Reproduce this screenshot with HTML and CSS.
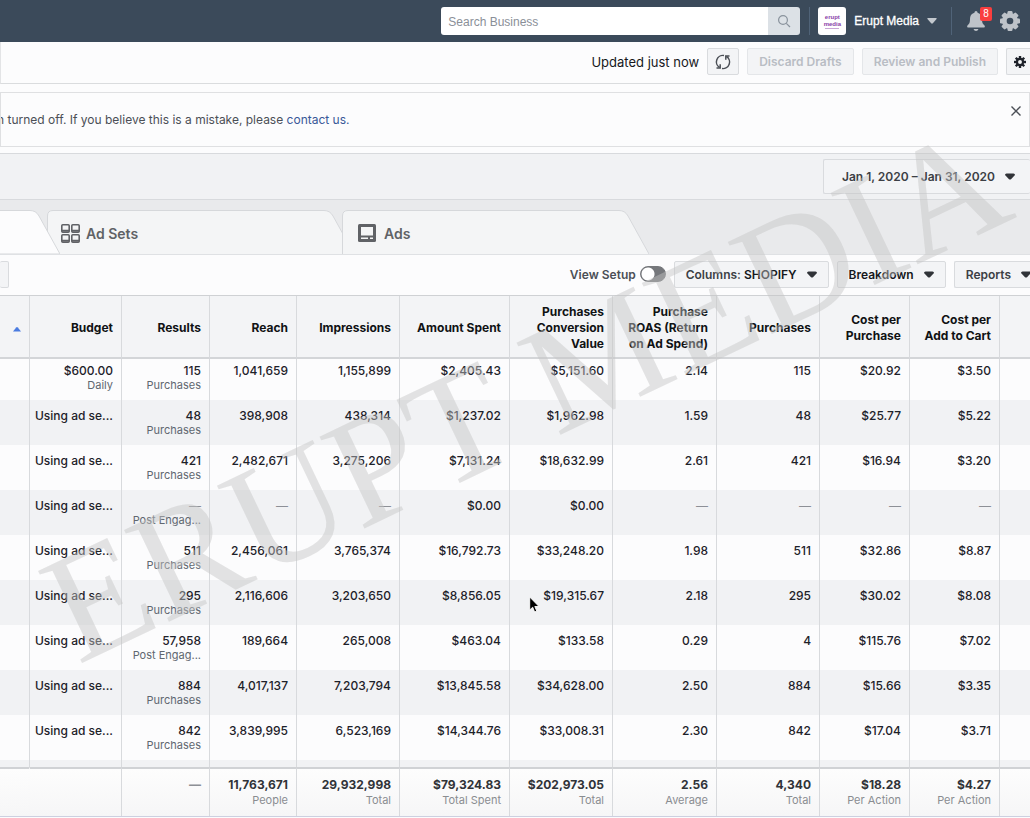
FILE: index.html
```html
<!DOCTYPE html>
<html lang="en">
<head>
    <meta charset="UTF-8">
    <title>Ads Manager</title>
    <link rel="stylesheet" href="styles.css">
</head>
<body>
    <header class="topbar">
        <form class="search">
            <input type="text" placeholder="Search Business" aria-label="Search Business">
            <button type="button" aria-label="Search">
                <svg width="14" height="14" viewBox="0 0 14 14" fill="none" stroke="#8a939d" stroke-width="1.2"><circle cx="6" cy="6" r="4.4"/><path d="M9.3 9.3L13 13"/></svg>
            </button>
        </form>
        <div class="divider"></div>
        <a href="#" class="account">
            <span class="logo"><b>erupt</b><b>media</b><i></i></span>
            Erupt Media
            <svg width="10" height="6" viewBox="0 0 12 7"><path d="M1 0h10q1 0 .5 1L7 6.300q-1 1-2 0L.5 1Q0 0 1 0z" fill="#c3c8ce"/></svg>
        </a>
        <div class="divider"></div>
        <button type="button" class="icon-btn bell" aria-label="Notifications">
            <svg width="18" height="20" viewBox="0 0 18 20" fill="#bec3c9"><path d="M9 0q1.500 0 1.600 1.700C13.800 2.500 15 5 15 8c0 4 1 5 2.300 6.200.8.800.9 2.300-.8 2.300h-15c-1.700 0-1.600-1.500-.8-2.300C2 13 3 12 3 8c0-3 1.200-5.500 4.400-6.300Q7.500 0 9 0z"/><path d="M6.500 18h5q-.7 2-2.500 2t-2.500-2z"/></svg>
            <span class="badge">8</span>
        </button>
        <button type="button" class="icon-btn" aria-label="Settings">
            <svg width="20" height="20" viewBox="0 0 20 20"><g fill="#bec3c9"><rect x="7.500" y="0" width="5" height="20" rx="1.200"/><rect x="7.500" y="0" width="5" height="20" rx="1.200" transform="rotate(45 10 10)"/><rect x="7.500" y="0" width="5" height="20" rx="1.200" transform="rotate(90 10 10)"/><rect x="7.500" y="0" width="5" height="20" rx="1.200" transform="rotate(135 10 10)"/><circle cx="10" cy="10" r="8"/></g><circle cx="10" cy="10" r="3.300" fill="#3b4a5a"/></svg>
        </button>
    </header>

    <main>
        <div class="status">
            <span>Updated just now</span>
            <button type="button" class="btn refresh" aria-label="Refresh">
                <svg width="16" height="16" viewBox="0 0 16 16" fill="none" stroke="#4b4f56" stroke-width="1.500"><path d="M4.600 13.500A6.500 6.500 0 0 1 9 1.500M11.400 2.500A6.500 6.500 0 0 1 7 14.500"/><path d="M1.500 14h3.700v-3.700M14.500 2h-3.700v3.700"/></svg>
            </button>
            <button type="button" class="btn" disabled>Discard Drafts</button>
            <button type="button" class="btn" disabled>Review and Publish</button>
            <button type="button" class="btn gear" aria-label="Options">
                <svg width="12" height="12" viewBox="0 0 20 20"><g fill="#1d2129"><rect x="8" y="0" width="4" height="20"/><rect x="8" y="0" width="4" height="20" transform="rotate(45 10 10)"/><rect x="8" y="0" width="4" height="20" transform="rotate(90 10 10)"/><rect x="8" y="0" width="4" height="20" transform="rotate(135 10 10)"/><circle cx="10" cy="10" r="7"/></g><circle cx="10" cy="10" r="3.200" fill="#f5f6f7"/></svg>
            </button>
        </div>

        <div class="notice">
            <p>n turned off. If you believe this is a mistake, please <a href="#">contact us.</a></p>
            <button type="button" class="close" aria-label="Close">
                <svg width="10" height="10" viewBox="0 0 10 10" stroke="#4b4f56" stroke-width="1.400"><path d="M.5.5l9 9M9.500.5l-9 9"/></svg>
            </button>
        </div>

        <div class="datebar">
            <button type="button" class="btn date">Jan 1, 2020 – Jan 31, 2020 <svg class="caret" viewBox="0 0 10 7"><path d="M0 2q0-1.500 1.500-1.500h7Q10 .5 10 2L6 6.200q-1 .8-2 0z"/></svg></button>
        </div>

        <nav class="tabs">
            <button type="button" class="tab tab-campaigns" aria-label="Campaigns">
                <svg class="tab-shape" viewBox="0 0 60 44"><path class="active-shape" d="M-2 .5H30Q36 .5 39 6L60 44H-2z"/></svg>
            </button>
            <button type="button" class="tab">
                <svg class="tab-shape" viewBox="0 0 307 44"><path d="M.5 44V6Q.5.5 6 .5H277Q283 .5 286 6L307 44"/></svg>
                <svg width="19" height="19" viewBox="0 0 19 19" fill="none" stroke="#606266" stroke-width="1.600"><rect x=".8" y=".8" width="7.400" height="7.400" rx="1"/><rect x="10.800" y=".8" width="7.400" height="7.400" rx="1"/><rect x=".8" y="10.800" width="7.400" height="7.400" rx="1"/><rect x="10.800" y="10.800" width="7.400" height="7.400" rx="1"/><path d="M1 6.700h7M11 6.700h7M1 16.700h7M11 16.700h7" stroke-width="2"/></svg>
                Ad Sets
            </button>
            <button type="button" class="tab tab-ads">
                <svg class="tab-shape" viewBox="0 0 307 44"><path d="M.5 44V6Q.5.5 6 .5H277Q283 .5 286 6L307 44"/></svg>
                <svg width="18" height="18" viewBox="0 0 18 18"><rect width="18" height="18" rx="1.500" fill="#606266"/><path d="M3 3h12v8.500H3zM3 13.500h7v1.500H3zM12 13.500h3v1.500h-3z" fill="#f4f5f6"/></svg>
                Ads
            </button>
        </nav>

        <div class="toolbar">
            <button type="button" class="btn stub" aria-label="More"></button>
            <label class="setup">View Setup <input type="checkbox"></label>
            <button type="button" class="btn"><span>Columns: <b>SHOPIFY</b></span> <svg class="caret" viewBox="0 0 10 7"><path d="M0 2q0-1.500 1.500-1.500h7Q10 .5 10 2L6 6.200q-1 .8-2 0z"/></svg></button>
            <button type="button" class="btn"><b>Breakdown</b> <svg class="caret" viewBox="0 0 10 7"><path d="M0 2q0-1.500 1.500-1.500h7Q10 .5 10 2L6 6.200q-1 .8-2 0z"/></svg></button>
            <button type="button" class="btn reports">Reports <svg class="caret" viewBox="0 0 10 7"><path d="M0 2q0-1.500 1.500-1.500h7Q10 .5 10 2L6 6.200q-1 .8-2 0z"/></svg></button>
        </div>

        <table class="report">
            <colgroup>
                <col class="c30"><col class="c92"><col class="c88"><col class="c87"><col class="c103"><col class="c110"><col class="c103"><col class="c104"><col class="c103"><col class="c90"><col class="c90"><col>
            </colgroup>
            <thead>
                <tr>
                    <th><svg width="8" height="5" viewBox="0 0 8 5"><path d="M3.200.5q.8-.8 1.600 0L8 4.500H0z" fill="#4a7be0"/></svg></th>
                    <th>Budget</th>
                    <th>Results</th>
                    <th>Reach</th>
                    <th>Impressions</th>
                    <th>Amount Spent</th>
                    <th>Purchases Conversion Value</th>
                    <th>Purchase<br>ROAS (Return<br>on Ad Spend)</th>
                    <th>Purchases</th>
                    <th>Cost per Purchase</th>
                    <th>Cost per<br>Add to Cart</th>
                    <th></th>
                </tr>
            </thead>
            <tbody>
                <tr class="first"><td></td><td>$600.00<small>Daily</small></td><td>115<small>Purchases</small></td><td>1,041,659</td><td>1,155,899</td><td>$2,405.43</td><td>$5,151.60</td><td>2.14</td><td>115</td><td>$20.92</td><td>$3.50</td><td></td></tr>
                <tr><td></td><td>Using ad se...</td><td>48<small>Purchases</small></td><td>398,908</td><td>438,314</td><td>$1,237.02</td><td>$1,962.98</td><td>1.59</td><td>48</td><td>$25.77</td><td>$5.22</td><td></td></tr>
                <tr><td></td><td>Using ad se...</td><td>421<small>Purchases</small></td><td>2,482,671</td><td>3,275,206</td><td>$7,131.24</td><td>$18,632.99</td><td>2.61</td><td>421</td><td>$16.94</td><td>$3.20</td><td></td></tr>
                <tr><td></td><td>Using ad se...</td><td><span class="none">—</span><small>Post Engag...</small></td><td class="none">—</td><td class="none">—</td><td>$0.00</td><td>$0.00</td><td class="none">—</td><td class="none">—</td><td class="none">—</td><td class="none">—</td><td></td></tr>
                <tr><td></td><td>Using ad se...</td><td>511<small>Purchases</small></td><td>2,456,061</td><td>3,765,374</td><td>$16,792.73</td><td>$33,248.20</td><td>1.98</td><td>511</td><td>$32.86</td><td>$8.87</td><td></td></tr>
                <tr><td></td><td>Using ad se...</td><td>295<small>Purchases</small></td><td>2,116,606</td><td>3,203,650</td><td>$8,856.05</td><td>$19,315.67</td><td>2.18</td><td>295</td><td>$30.02</td><td>$8.08</td><td></td></tr>
                <tr><td></td><td>Using ad se...</td><td>57,958<small>Post Engag...</small></td><td>189,664</td><td>265,008</td><td>$463.04</td><td>$133.58</td><td>0.29</td><td>4</td><td>$115.76</td><td>$7.02</td><td></td></tr>
                <tr><td></td><td>Using ad se...</td><td>884<small>Purchases</small></td><td>4,017,137</td><td>7,203,794</td><td>$13,845.58</td><td>$34,628.00</td><td>2.50</td><td>884</td><td>$15.66</td><td>$3.35</td><td></td></tr>
                <tr><td></td><td>Using ad se...</td><td>842<small>Purchases</small></td><td>3,839,995</td><td>6,523,169</td><td>$14,344.76</td><td>$33,008.31</td><td>2.30</td><td>842</td><td>$17.04</td><td>$3.71</td><td></td></tr>
                <tr class="peek"><td></td><td></td><td></td><td></td><td></td><td></td><td></td><td></td><td></td><td></td><td></td><td></td></tr>
            </tbody>
            <tfoot>
                <tr><td></td><td></td><td class="none">—</td><td>11,763,671<small>People</small></td><td>29,932,998<small>Total</small></td><td>$79,324.83<small>Total Spent</small></td><td>$202,973.05<small>Total</small></td><td>2.56<small>Average</small></td><td>4,340<small>Total</small></td><td>$18.28<small>Per Action</small></td><td>$4.27<small>Per Action</small></td><td></td></tr>
            </tfoot>
        </table>
    </main>

    <div class="watermark">ERUPT MEDIA</div>
    <svg class="cursor" width="11" height="18" viewBox="0 0 11 18"><path d="M.7 1v13l3-2.800L5.600 16l2.200-.9-2-4.600H10z" fill="#000" stroke="#fff" stroke-width=".9"/></svg>
</body>
</html>
```
FILE: styles.css
```css
* {
    box-sizing: border-box;
}
body {
    margin: 0;
    position: relative;
    min-height: 100vh;
    overflow: hidden;
    background: #fcfcfd;
    font-family: Inter, "Liberation Sans", sans-serif;
    font-size: 12px;
    color: #1d2129;
}
button, input {
    font-family: inherit;
    font-size: inherit;
}
a {
    text-decoration: none;
}

/* top bar */
.topbar {
    display: flex;
    align-items: center;
    justify-content: flex-end;
    height: 42px;
    padding-right: 10px;
    background: #3b4a5a;
    font-family: "Liberation Sans", Arial, sans-serif;
}
.search {
    display: flex;
    width: 359px;
    height: 28px;
}
.search input {
    flex: 1;
    min-width: 0;
    padding: 1px 7px 0;
    border: none;
    border-radius: 3px 0 0 3px;
    background: #fff;
}
.search input::placeholder {
    color: #8a8f98;
}
.search button {
    display: flex;
    align-items: center;
    justify-content: center;
    width: 32px;
    padding: 0;
    border: none;
    border-radius: 0 3px 3px 0;
    background: #dce1e6;
}
.divider {
    width: 1px;
    height: 28px;
    margin-left: 9px;
    background: #506378;
}
.account {
    display: flex;
    align-items: center;
    gap: 8px;
    margin: 0 5px 0 8px;
    color: #fff;
    -webkit-text-stroke: 0.3px #fff;
}
.logo {
    display: flex;
    flex-direction: column;
    align-items: center;
    justify-content: center;
    width: 28px;
    height: 28px;
    border-radius: 3px;
    background: #fff;
    color: #8a3fa8;
    font-size: 6px;
    line-height: 7px;
    -webkit-text-stroke: 0;
}
.logo i {
    width: 14px;
    height: 1px;
    background: #c9a6d6;
}
.icon-btn {
    position: relative;
    display: flex;
    padding: 0;
    margin-left: 15px;
    border: none;
    background: none;
}
.badge {
    position: absolute;
    top: -4px;
    right: -7px;
    width: 12px;
    border-radius: 2px;
    background: #fa3e3e;
    color: #fff;
    font-size: 10px;
    line-height: 14px;
    text-align: center;
}

/* shared buttons */
.btn {
    display: flex;
    align-items: center;
    gap: 10px;
    height: 27px;
    padding: 0 11px;
    border: 1px solid #d9dbde;
    border-radius: 2px;
    background: #f3f4f6;
    color: #3c3f45;
    font-weight: 600;
    white-space: nowrap;
}
.btn b {
    color: #16181c;
    font-weight: 600;
}
.btn:disabled {
    border-color: #e4e6e9;
    color: #b9bdc4;
}
.caret {
    width: 10px;
    height: 7px;
    fill: #303338;
}

.status {
    display: flex;
    align-items: center;
    justify-content: flex-end;
    gap: 8px;
    height: 42px;
    padding-bottom: 2px;
    border-bottom: 1px solid #dadcde;
    border-left: 1px solid #e3e4e6;
}
.status span {
    font-size: 13px;
    color: #16181c;
}
.status .refresh {
    padding: 0 7px;
}
.status .gear {
    padding: 0 4px 0 7px;
    border-right: none;
    border-radius: 2px 0 0 2px;
}

.notice {
    display: flex;
    justify-content: space-between;
    align-items: flex-start;
    height: 55px;
    margin: 8px 0 6px;
    padding: 0 8px 0 0;
    border: 1px solid #dfe0e2;
    overflow: hidden;
}
.notice p {
    margin: 19px 0 0 -4px;
    line-height: 16px;
    color: #4b4f56;
}
.notice a {
    color: #385898;
}
.close {
    display: flex;
    margin-top: 13px;
    padding: 0;
    border: none;
    background: none;
}

.datebar {
    display: flex;
    justify-content: flex-end;
    align-items: center;
    height: 47px;
    border: solid #d8dadd;
    border-width: 1px 0;
    background: #f1f2f4;
}
.date {
    height: 35px;
    padding: 0 15px 0 18px;
    border-right: none;
}

/* tabs */
.tabs {
    display: flex;
    padding-top: 10px;
    background: #e9eaec;
}
.tab {
    position: relative;
    z-index: 1;
    display: flex;
    align-items: center;
    gap: 6px;
    width: 307px;
    height: 44px;
    margin-left: -13px;
    padding: 2px 14px 0;
    border: none;
    background: none;
    color: #606266;
    font-size: 14px;
    font-weight: 600;
}
.tab + .tab {
    z-index: 0;
}
.tab > svg {
    position: relative;
}
.tab .tab-shape {
    position: absolute;
    top: 0;
    left: 0;
    width: 100%;
    height: 44px;
    z-index: -1;
    fill: #f4f5f6;
    stroke: #d6d8db;
}
.tab-campaigns {
    width: 60px;
    margin-left: 0;
}
.tab-ads {
    gap: 8px;
    margin-left: -12px;
    padding-left: 16px;
}
.tab .active-shape {
    fill: #fcfcfd;
}

.toolbar {
    display: flex;
    align-items: center;
    justify-content: flex-end;
    gap: 8px;
    height: 42px;
    padding-bottom: 2px;
    border-bottom: 1px solid #cfd1d4;
    border-top: 1px solid #dfe1e4;
    overflow: hidden;
}
.stub {
    width: 9px;
    margin-right: auto;
    padding: 0;
    border-left: none;
}
.reports {
    margin-right: -3px;
    padding-right: 2px;
    border-right: none;
}
.setup {
    display: flex;
    align-items: center;
    gap: 4px;
    color: #4b4f56;
    font-weight: 600;
}
.setup input {
    appearance: none;
    width: 26px;
    height: 16px;
    margin: 0;
    border: 1px solid #75777b;
    border-radius: 8px;
    background: radial-gradient(circle at 7px 7px, #fff 6px, #75777b 7px);
}

/* report table */
.report {
    width: 100%;
    table-layout: fixed;
    border-collapse: separate;
    border-spacing: 0;
    border-bottom: 1px solid #cdd0e0;
    text-align: right;
    font-weight: 500;
}
.c30 { width: 30px; }
.c87 { width: 87px; }
.c88 { width: 88px; }
.c90 { width: 90px; }
.c92 { width: 92px; }
.c103 { width: 103px; }
.c104 { width: 104px; }
.c110 { width: 110px; }

.report th, .report td {
    padding: 8px 8px 0 0;
    border-right: 1px solid #d8dadd;
    vertical-align: top;
    line-height: 15px;
    white-space: nowrap;
}
.report th:last-child, .report td:last-child {
    border-right: none;
}
.report thead th {
    height: 63px;
    padding: 2px 8px 0 0;
    border-bottom: 2px solid #d3d5d8;
    background: #f3f4f6;
    color: #101214;
    font-weight: 700;
    line-height: 16px;
    vertical-align: middle;
    white-space: normal;
}
.report tbody tr {
    height: 45px;
}
.report tbody tr:nth-child(even) {
    background: #f1f2f4;
}
.report tbody .first {
    height: 41px;
}
.report .first td {
    padding-top: 4px;
}
.report tbody .peek {
    height: 7px;
    background: linear-gradient(#f1f2f4, #e3e4e6);
}
.report .peek td {
    padding: 0;
}
.report small {
    display: block;
    font-size: 11px;
    font-weight: 400;
    color: #606770;
}
.report td.none, .none {
    color: #8d9096;
}
.report tfoot td {
    height: 49px;
    padding-top: 8px;
    border-top: 2px solid #d0d2d5;
    background: linear-gradient(#fdfdfd, #f6f6f7);
    color: #303338;
    font-weight: 700;
}
.report tfoot td:first-child {
    border-right-color: transparent;
}
.report tfoot small {
    line-height: 16px;
    color: #8a8d91;
}

/* things lying over the page */
.watermark {
    position: absolute;
    left: 78px;
    top: 536px;
    transform: rotate(-25.5deg);
    transform-origin: 0 129px;
    color: rgba(196, 196, 196, 0.46);
    font-family: "Liberation Serif", "Times New Roman", serif;
    font-size: 156px;
    line-height: 154px;
    white-space: nowrap;
    pointer-events: none;
}
.cursor {
    position: absolute;
    left: 529px;
    top: 596px;
}
```
